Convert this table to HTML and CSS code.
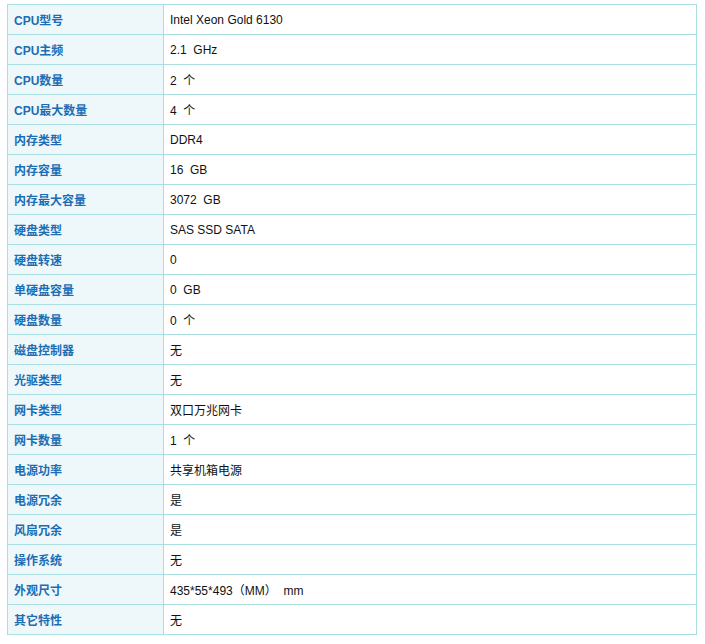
FILE: index.html
```html
<!DOCTYPE html>
<html>
<head>
<meta charset="utf-8">
<link rel="stylesheet" href="styles.css">
</head>
<body>
<table class="spec">
<tr><th>CPU型号</th><td>Intel Xeon Gold 6130</td></tr>
<tr><th>CPU主频</th><td>2.1&nbsp; GHz</td></tr>
<tr><th>CPU数量</th><td>2&nbsp; 个</td></tr>
<tr><th>CPU最大数量</th><td>4&nbsp; 个</td></tr>
<tr><th>内存类型</th><td>DDR4</td></tr>
<tr><th>内存容量</th><td>16&nbsp; GB</td></tr>
<tr><th>内存最大容量</th><td>3072&nbsp; GB</td></tr>
<tr><th>硬盘类型</th><td>SAS SSD SATA</td></tr>
<tr><th>硬盘转速</th><td>0</td></tr>
<tr><th>单硬盘容量</th><td>0&nbsp; GB</td></tr>
<tr><th>硬盘数量</th><td>0&nbsp; 个</td></tr>
<tr><th>磁盘控制器</th><td>无</td></tr>
<tr><th>光驱类型</th><td>无</td></tr>
<tr><th>网卡类型</th><td>双口万兆网卡</td></tr>
<tr><th>网卡数量</th><td>1&nbsp; 个</td></tr>
<tr><th>电源功率</th><td>共享机箱电源</td></tr>
<tr><th>电源冗余</th><td>是</td></tr>
<tr><th>风扇冗余</th><td>是</td></tr>
<tr><th>操作系统</th><td>无</td></tr>
<tr><th>外观尺寸</th><td>435*55*493（MM）&nbsp; mm</td></tr>
<tr><th>其它特性</th><td>无</td></tr>
</table>
</body>
</html>
```
FILE: styles.css
```css
html, body {
  margin: 0;
  padding: 0;
  background: #fff;
}
body {
  padding: 4px 0 0 7px;
  font-family: "Liberation Sans", Arial, "Noto Sans CJK SC", sans-serif;
  font-size: 12px;
}
.spec {
  border-collapse: collapse;
  width: 690px;
}
.spec th, .spec td {
  border: 1px solid #a9dfe0;
  height: 30px;
  padding: 0 6px;
  box-sizing: border-box;
  text-align: left;
  vertical-align: middle;
}
.spec th {
  width: 156px;
  background: #eef8fa;
  color: #1b6db4;
  font-weight: bold;
}
.spec td {
  color: #111;
  font-weight: normal;
}
```
